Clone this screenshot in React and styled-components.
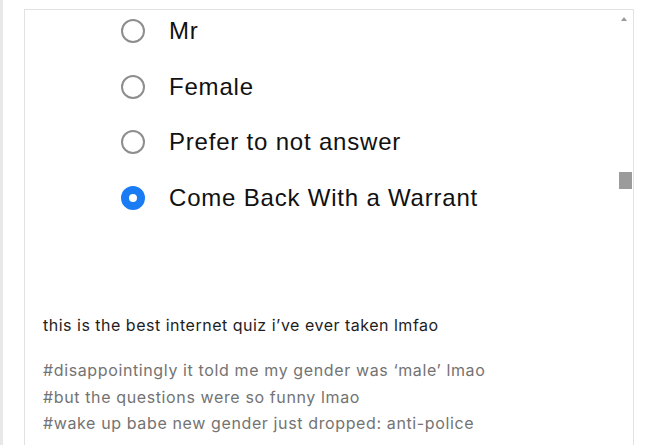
import React from "react";
import styled, { createGlobalStyle } from "styled-components";

const Global = createGlobalStyle`
  html, body {
    margin: 0;
    padding: 0;
    background: #fff;
  }
  body {
    width: 655px;
    height: 445px;
    overflow: hidden;
  }
`;

const Page = styled.div`
  height: 445px;
  border-left: 3px solid #e8e8e8;
  padding: 9px 0 0 21px;
  box-sizing: border-box;
`;

const Card = styled.div`
  position: relative;
  width: 610px;
  height: 436px;
  box-sizing: border-box;
  border: 1px solid #e2e2e2;
  border-bottom: none;
`;

const Quiz = styled.div`
  display: flex;
  flex-direction: column;
  gap: 31.5px;
  padding: 9px 0 0 96px;
  height: 302px;
  box-sizing: border-box;
`;

const Option = styled.div`
  display: flex;
  align-items: center;
  gap: 24px;
  height: 24px;
  font-family: "Liberation Sans", Arial, sans-serif;
  font-size: 24px;
  letter-spacing: 0.8px;
  color: #111;
`;

const Radio = styled.span`
  width: 24px;
  height: 24px;
  border-radius: 50%;
  box-sizing: border-box;
  flex-shrink: 0;
  border: ${(p) => (p.checked ? "8px solid #1a7cf5" : "2.5px solid #8e8e8e")};
  background: #fff;
`;

const Body = styled.div`
  padding: 0 18px;
  font-family: Inter, "Noto Sans", sans-serif;
  font-size: 16px;
`;

const Caption = styled.p`
  margin: 0 0 19px;
  line-height: 26px;
  letter-spacing: 0.5px;
  color: #1e1e1e;
`;

const Tags = styled.div`
  display: flex;
  flex-direction: column;
  color: #737373;
  line-height: 26.5px;
  letter-spacing: 0.62px;
`;

const ScrollUp = styled.div`
  position: absolute;
  top: 7px;
  right: 6px;
  width: 0;
  height: 0;
  border-left: 3.5px solid transparent;
  border-right: 3.5px solid transparent;
  border-bottom: 4px solid #999;
`;

const Thumb = styled.div`
  position: absolute;
  top: 162px;
  right: 1px;
  width: 13px;
  height: 17px;
  background: #9b9b9b;
`;

const options = [
  { label: "Mr" },
  { label: "Female" },
  { label: "Prefer to not answer" },
  { label: "Come Back With a Warrant", checked: true },
];

const tags = [
  "#disappointingly it told me my gender was \u2018male\u2019 lmao",
  "#but the questions were so funny lmao",
  "#wake up babe new gender just dropped: anti-police",
];

export default function App() {
  return (
    <Page>
      <Global />
      <Card>
        <Quiz>
          {options.map((o) => (
            <Option key={o.label}>
              <Radio checked={o.checked} />
              {o.label}
            </Option>
          ))}
        </Quiz>
        <Body>
          <Caption>this is the best internet quiz i’ve ever taken lmfao</Caption>
          <Tags>
            {tags.map((t) => (
              <span key={t}>{t}</span>
            ))}
          </Tags>
        </Body>
        <ScrollUp />
        <Thumb />
      </Card>
    </Page>
  );
}
